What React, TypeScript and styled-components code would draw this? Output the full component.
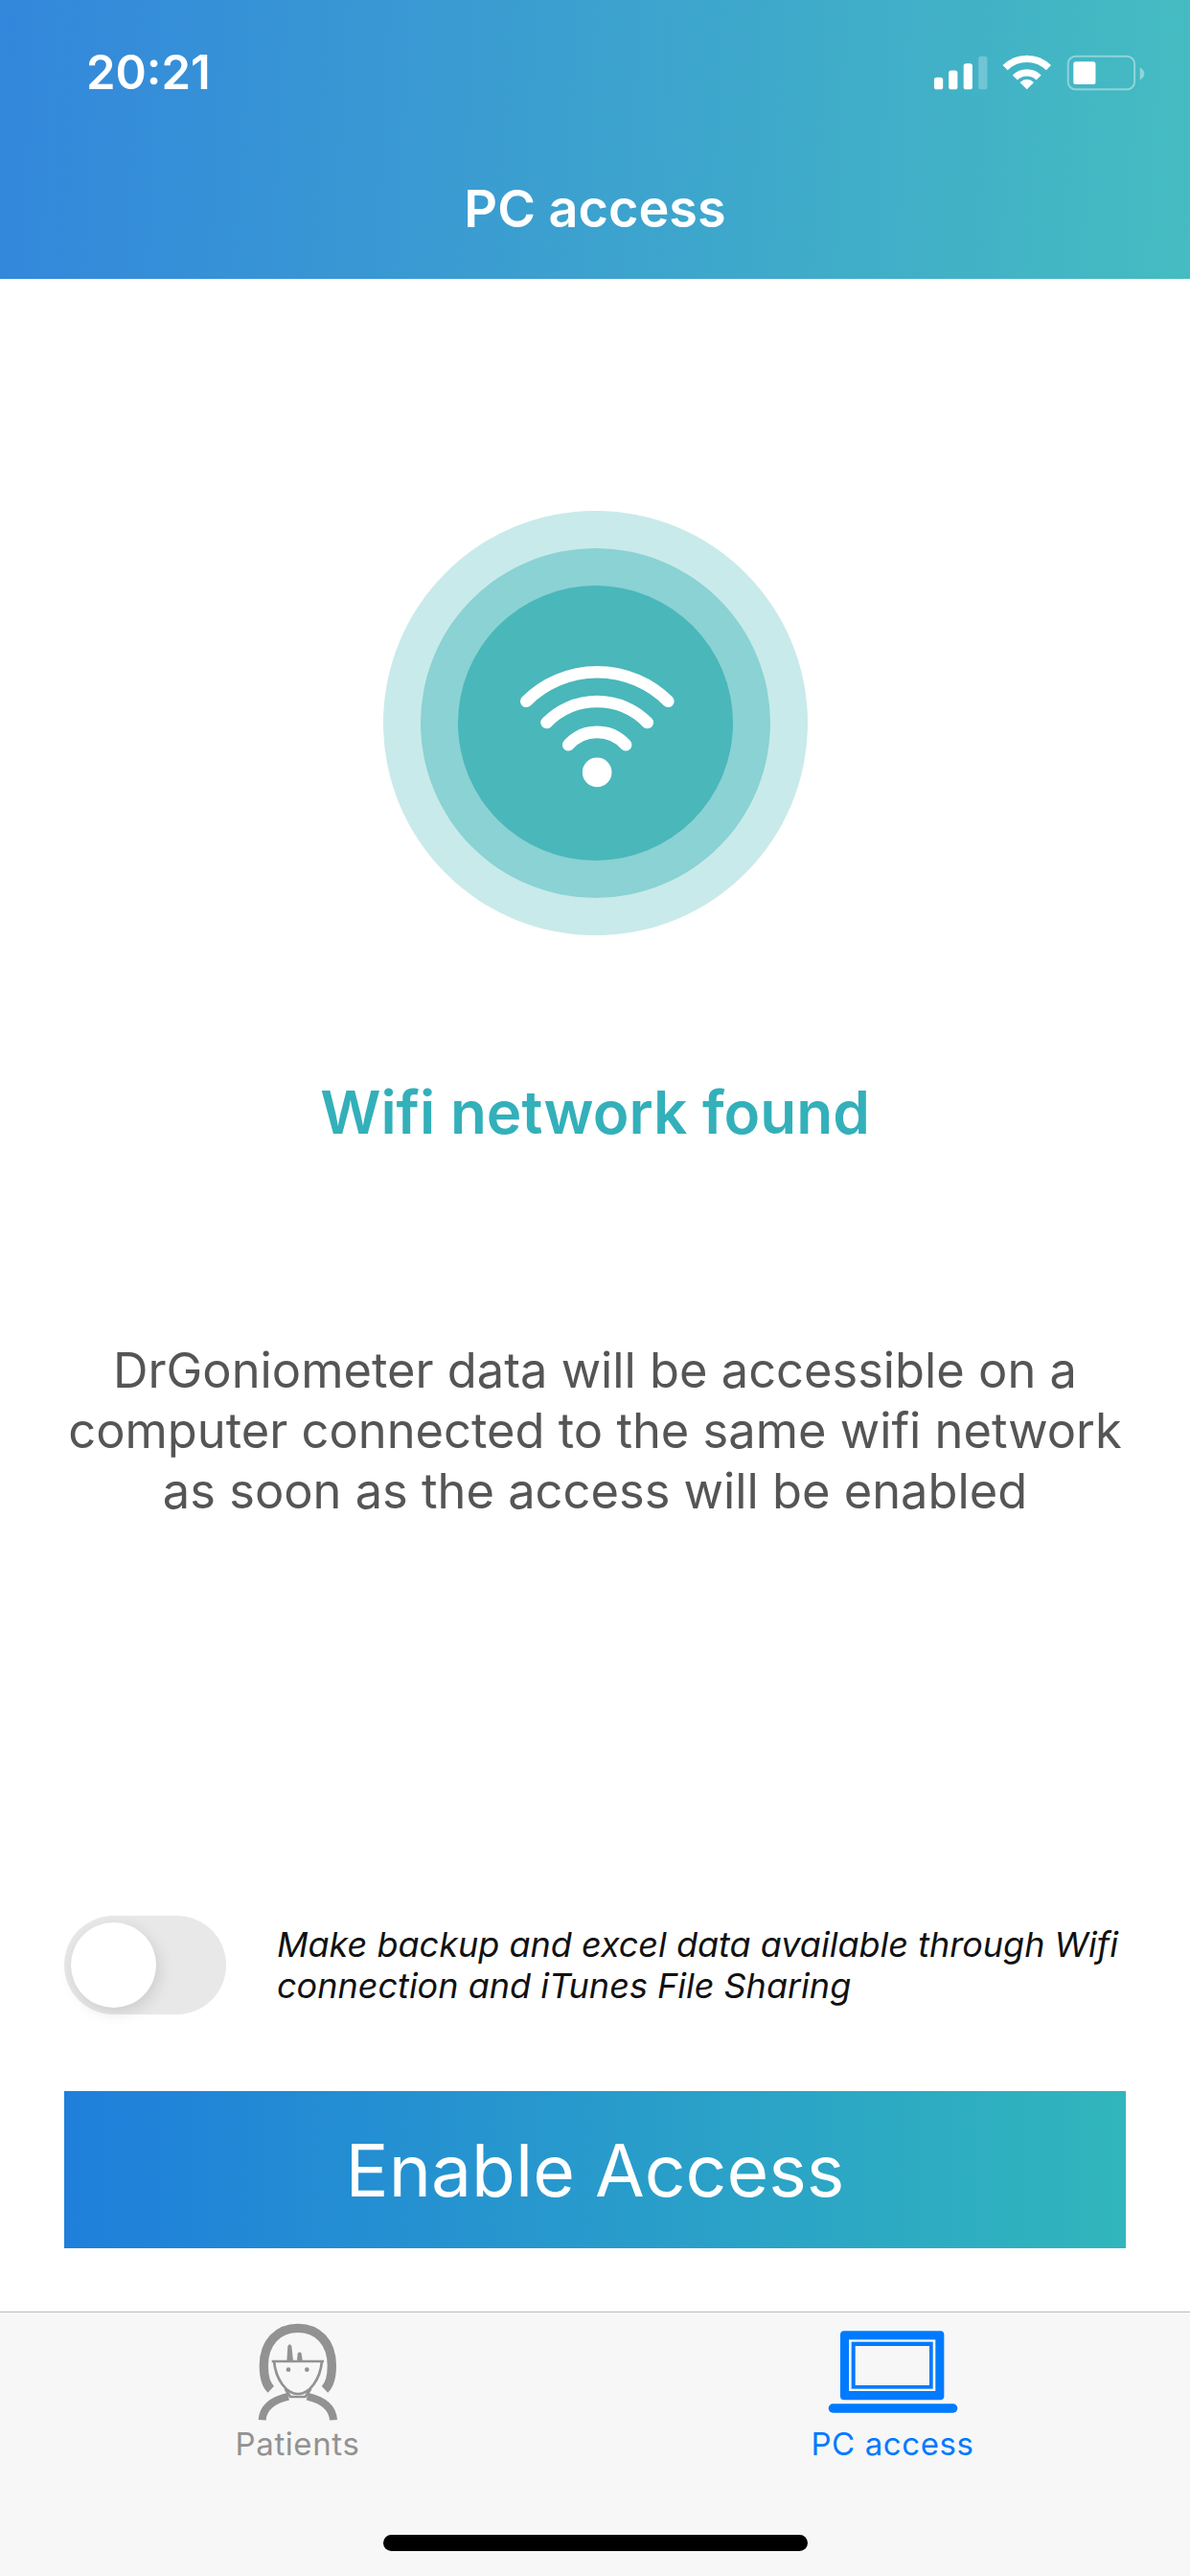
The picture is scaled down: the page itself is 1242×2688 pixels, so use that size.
import styled, { createGlobalStyle } from "styled-components";

const GlobalStyle = createGlobalStyle`
  html, body {
    margin: 0;
    padding: 0;
    background: #fff;
  }
  * {
    box-sizing: border-box;
  }
`;

const Screen = styled.div`
  width: 1242px;
  height: 2688px;
  display: flex;
  flex-direction: column;
  overflow: hidden;
  background: #fff;
  font-family: Inter, "Liberation Sans", sans-serif;
`;

const Header = styled.header`
  height: 291px;
  padding-top: 57px;
  display: flex;
  flex-direction: column;
  background: linear-gradient(93deg, #3387dc 0%, #45bcc1 100%);
  color: #fff;
`;

const StatusBar = styled.div`
  height: 38px;
  padding: 0 47px 0 90px;
  display: flex;
  align-items: center;
  justify-content: space-between;
`;

const Clock = styled.span`
  font-size: 49px;
  font-weight: 600;
  line-height: 38px;
`;

const Title = styled.h1`
  margin: 93px 0 0;
  font-size: 54px;
  font-weight: 600;
  line-height: 60px;
  text-align: center;
`;

const Main = styled.main`
  flex: 1;
  display: flex;
  flex-direction: column;
  align-items: center;
  padding: 242px 67px 66px;
`;

const Ring = styled.div<{ $size: number; $color: string }>`
  width: ${({ $size }) => $size}px;
  height: ${({ $size }) => $size}px;
  flex-shrink: 0;
  border-radius: 50%;
  background: ${({ $color }) => $color};
  display: flex;
  align-items: center;
  justify-content: center;
`;

const Heading = styled.h2`
  margin: 146px 0 0;
  font-size: 62px;
  font-weight: 600;
  line-height: 78px;
  color: #33b0ba;
  text-align: center;
`;

const Description = styled.p`
  margin: 198px -20px 0;
  font-size: 50.6px;
  font-weight: 400;
  line-height: 63px;
  color: #555;
  text-align: center;
  white-space: nowrap;
`;

const ToggleRow = styled.div`
  margin-top: auto;
  width: 100%;
  display: flex;
  align-items: center;
  gap: 53px;
`;

const Track = styled.div`
  width: 169px;
  height: 103px;
  flex-shrink: 0;
  padding-left: 7px;
  border-radius: 52px;
  background: #e8e8e8;
  display: flex;
  align-items: center;
`;

const Knob = styled.div`
  width: 89px;
  height: 89px;
  border-radius: 50%;
  background: #fff;
  box-shadow: 3px 5px 16px rgba(0, 0, 0, 0.12);
`;

const ToggleText = styled.span`
  font-size: 36px;
  font-style: italic;
  line-height: 43px;
  color: #111;
  white-space: nowrap;
`;

const EnableButton = styled.button`
  width: 100%;
  height: 164px;
  flex-shrink: 0;
  margin-top: 80px;
  border: 0;
  padding: 0;
  background: linear-gradient(90deg, #1f7fdb 0%, #31b6bc 100%);
  color: #fff;
  font-family: inherit;
  font-size: 75px;
  font-weight: 400;
`;

const TabBar = styled.nav`
  height: 276px;
  flex-shrink: 0;
  position: relative;
  display: grid;
  grid-template-columns: 1fr 1fr;
  align-items: start;
  padding-top: 7px;
  border-top: 1px solid #bcbcbc;
  background: #f7f7f7;
`;

const Tab = styled.div<{ $active?: boolean }>`
  display: flex;
  flex-direction: column;
  align-items: center;
  color: ${({ $active }) => ($active ? "#007aff" : "#929292")};
`;

const TabLabel = styled.span`
  font-size: 33px;
  font-weight: 400;
  line-height: 40px;
  letter-spacing: 0.6px;
`;

const HomeIndicator = styled.div`
  position: absolute;
  left: 400px;
  top: 232px;
  width: 443px;
  height: 17px;
  border-radius: 9px;
  background: #000;
`;

function StatusIcons() {
  return (
    <svg width="225" height="38" viewBox="60 50 675 115" fill="#fff">
      <rect x="72" y="122" width="28" height="38" rx="8" />
      <rect x="118" y="100" width="28" height="60" rx="8" />
      <rect x="165" y="78" width="28" height="82" rx="8" />
      <rect x="212" y="55" width="28" height="105" rx="8" opacity="0.25" />
      <g fill="none" stroke="#fff" strokeWidth="22">
        <path d="M296.4 91.4A97 97 0 0 1 433.6 91.4" />
        <path d="M327.5 122.5A53 53 0 0 1 402.5 122.5" />
      </g>
      <path d="M365 160L343 138Q365 118 387 138Z" />
      <rect x="495" y="55" width="210" height="105" rx="24" fill="none" stroke="#fff" strokeWidth="6" opacity="0.4" />
      <rect x="512" y="72" width="70" height="72" rx="8" />
      <path d="M722 90Q736 98 736 110Q736 122 722 130Z" opacity="0.4" />
    </svg>
  );
}

function WifiGlyph() {
  return (
    <svg width="173" height="140" viewBox="465 523 520 420">
      <g fill="none" stroke="#fff" strokeWidth="38" strokeLinecap="round">
        <path d="M508 663A316 316 0 0 1 953 663" />
        <path d="M572 730A222 222 0 0 1 888 730" />
        <path d="M640 800A121 121 0 0 1 820 800" />
      </g>
      <circle cx="730" cy="886" r="46" fill="#fff" />
    </svg>
  );
}

function PatientIcon() {
  return (
    <svg width="160" height="110" viewBox="92 60 480 330" fill="currentColor">
      <g fill="none" stroke="currentColor">
        <path
          strokeWidth="28"
          d="M247 280C228 262 225 225 225 205C225 132 270 88 332 88C394 88 438 132 438 205C438 225 435 262 416 280"
        />
        <path
          strokeWidth="8"
          d="M250 192H413M257 192C263 250 296 294 332 294C368 294 401 250 407 192"
        />
        <path strokeWidth="24" d="M220 376C222 340 250 314 302 302" />
        <path strokeWidth="24" d="M443 376C441 340 413 314 361 302" />
        <path strokeWidth="8" d="M292 278L308 303H355L372 278" />
      </g>
      <path d="M297 190L300 145Q306 132 312 145L317 190Z" />
      <path d="M329 190L331 167Q337 158 343 167L346 190Z" />
      <circle cx="302" cy="218" r="7" />
      <circle cx="360" cy="218" r="7" />
    </svg>
  );
}

function LaptopIcon() {
  return (
    <svg width="160" height="110" viewBox="95 60 480 330">
      <rect x="170" y="97" width="325" height="216" rx="12" fill="currentColor" />
      <rect x="197" y="124" width="271" height="161" fill="#f7f7f7" />
      <rect x="205" y="131" width="255" height="147" fill="currentColor" />
      <rect x="217" y="144" width="232" height="123" fill="#f7f7f7" />
      <rect x="133" y="325" width="404" height="28" rx="14" fill="currentColor" />
    </svg>
  );
}

export default function App() {
  return (
    <>
      <GlobalStyle />
      <Screen>
        <Header>
          <StatusBar>
            <Clock>20:21</Clock>
            <StatusIcons />
          </StatusBar>
          <Title>PC access</Title>
        </Header>
        <Main>
          <Ring $size={443} $color="#c9eaea">
            <Ring $size={365} $color="#8ad2d3">
              <Ring $size={287} $color="#4ab7ba">
                <WifiGlyph />
              </Ring>
            </Ring>
          </Ring>
          <Heading>Wifi network found</Heading>
          <Description>
            DrGoniometer data will be accessible on a
            <br />
            computer connected to the same wifi network
            <br />
            as soon as the access will be enabled
          </Description>
          <ToggleRow>
            <Track>
              <Knob />
            </Track>
            <ToggleText>
              Make backup and excel data available through Wifi
              <br />
              connection and iTunes File Sharing
            </ToggleText>
          </ToggleRow>
          <EnableButton>Enable Access</EnableButton>
        </Main>
        <TabBar>
          <Tab>
            <PatientIcon />
            <TabLabel>Patients</TabLabel>
          </Tab>
          <Tab $active>
            <LaptopIcon />
            <TabLabel>PC access</TabLabel>
          </Tab>
          <HomeIndicator />
        </TabBar>
      </Screen>
    </>
  );
}
